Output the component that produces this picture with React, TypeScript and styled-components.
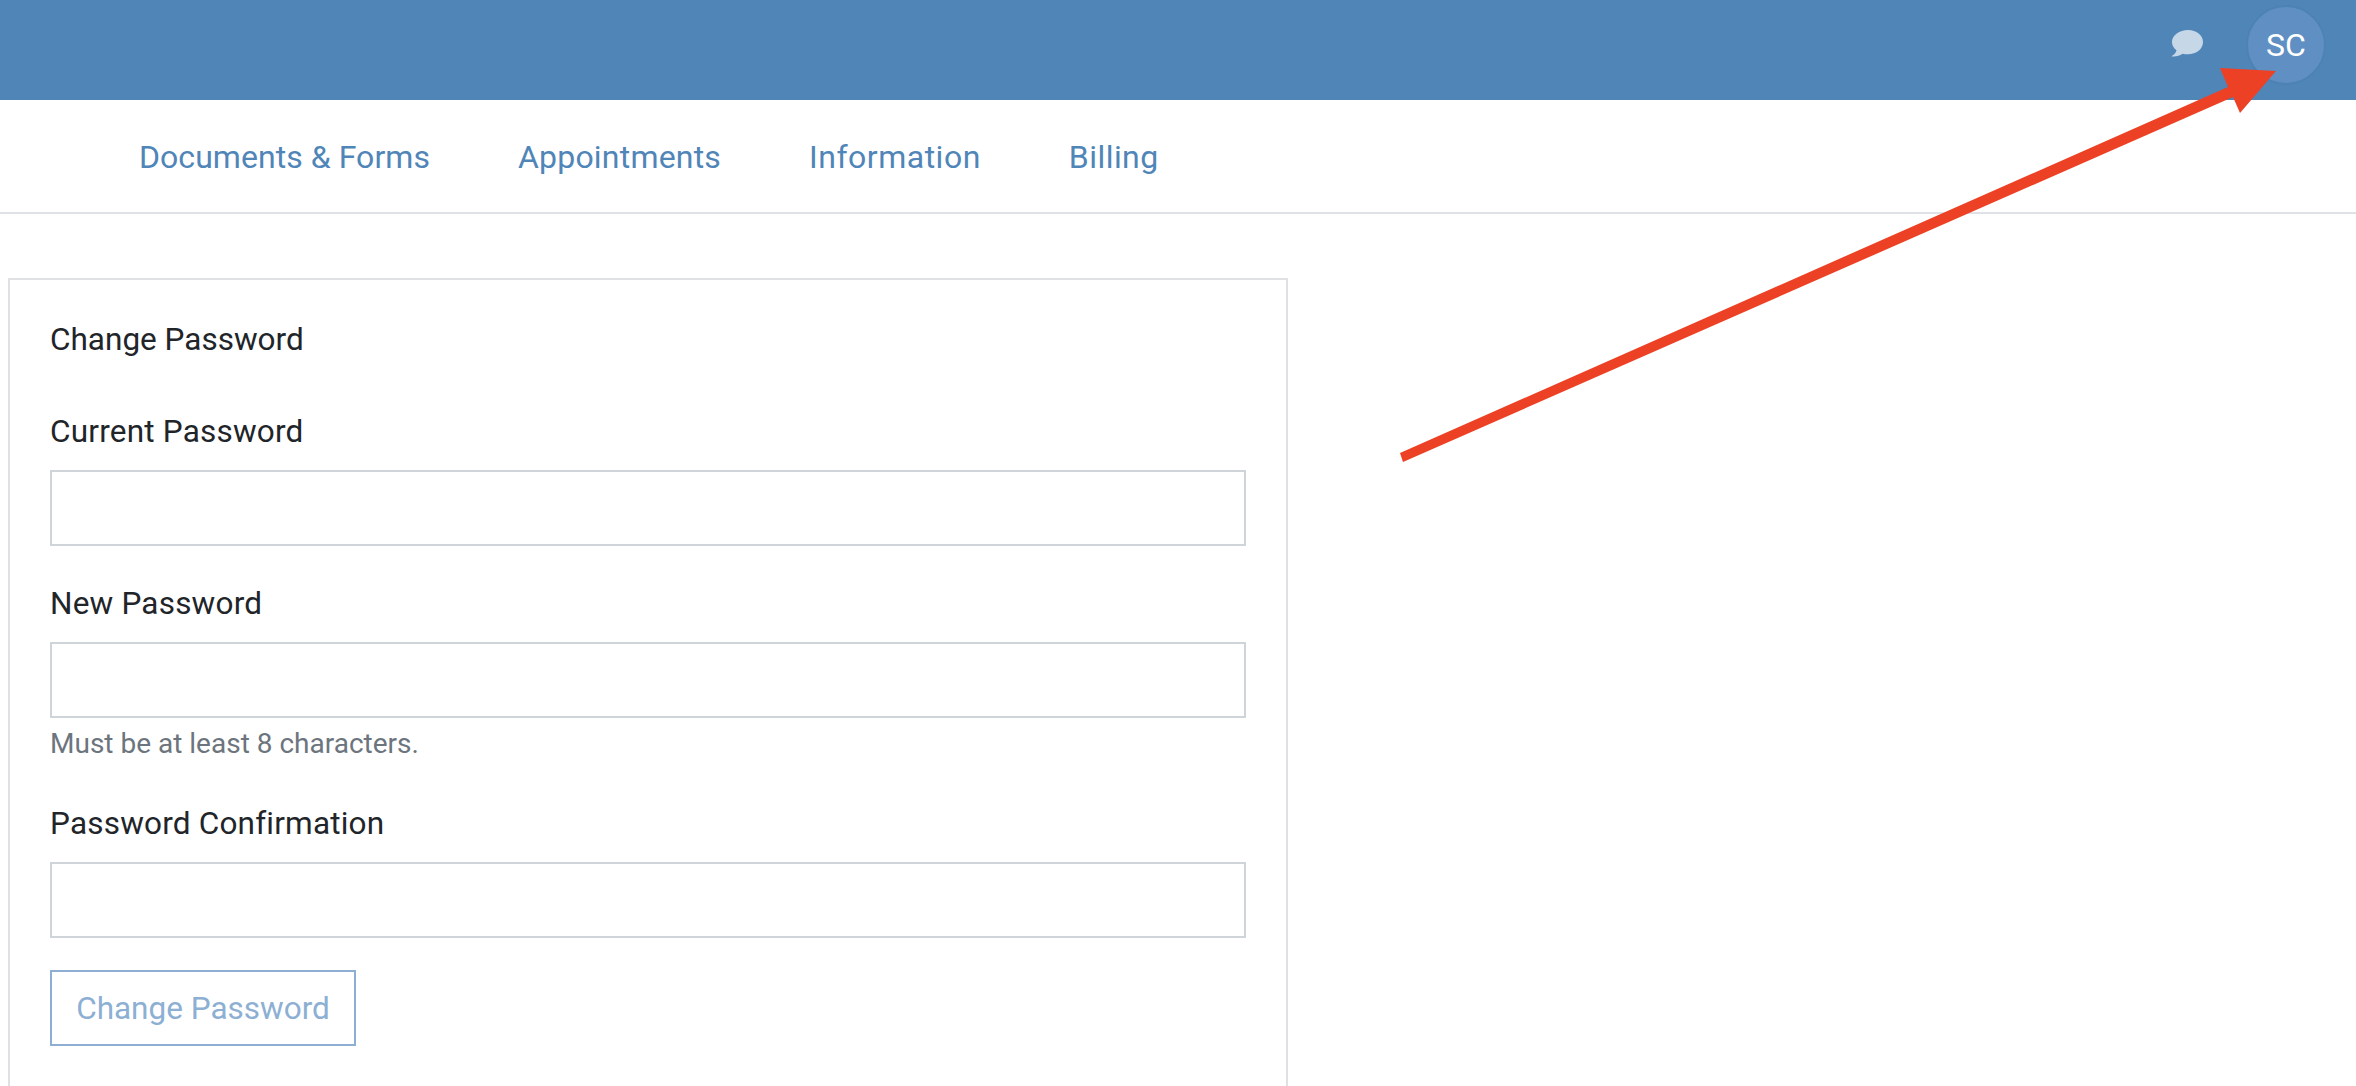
import React from "react";
import styled, { createGlobalStyle } from "styled-components";

const Global = createGlobalStyle`
  html, body { margin: 0; padding: 0; background: #fff; height: 100%; overflow: hidden; }
  body { font-family: "Roboto", "Liberation Sans", sans-serif; color: #212529; font-size: 32px; }
  * { box-sizing: border-box; }
`;

const Page = styled.div`
  position: relative;
  width: 2356px;
  height: 1086px;
  overflow: hidden;
`;

const TopBar = styled.header`
  height: 100px;
  background: #5085b8;
  display: flex;
  align-items: center;
  justify-content: flex-end;
  gap: 42px;
  padding: 0 30px 10px 0;
`;

const ChatButton = styled.div`
  display: flex;
  margin-top: -4px;
`;

const Avatar = styled.div`
  width: 80px;
  height: 80px;
  border-radius: 50%;
  background: #6090c3;
  border: 2px solid #4d82b5;
  color: #fff;
  font-size: 32px;
  display: flex;
  align-items: center;
  justify-content: center;
`;

const Nav = styled.nav`
  height: 114px;
  border-bottom: 2px solid #dee2e6;
  display: flex;
  align-items: center;
  gap: 88px;
  padding: 2px 0 0 139px;
`;

const NavLink = styled.a<{ $track: number }>`
  color: #5085b8;
  font-size: 32px;
  letter-spacing: ${(p) => p.$track}px;
  text-decoration: none;
`;

const Card = styled.section`
  margin: 64px 0 0 8px;
  width: 1280px;
  height: 900px;
  border: 2px solid #dfe1e4;
  padding: 40px 40px;
`;

const CardTitle = styled.h2`
  margin: 0 0 52px;
  font-size: 31.5px;
  line-height: 40px;
  font-weight: 400;
`;

const Field = styled.div<{ $gap: number }>`
  margin-bottom: ${(p) => p.$gap}px;
`;

const Label = styled.label`
  display: block;
  font-size: 31.5px;
  letter-spacing: 0.2px;
  line-height: 40px;
  margin-bottom: 18px;
`;

const Input = styled.div`
  width: 1196px;
  height: 76px;
  border: 2px solid #ced4da;
  background: #fff;
`;

const Hint = styled.div`
  font-size: 28px;
  line-height: 36px;
  margin-top: 8px;
  color: #6c757d;
`;

const SubmitButton = styled.button`
  width: 306px;
  height: 76px;
  border: 2px solid #8cafd3;
  background: #fff;
  color: #8cafd3;
  font: inherit;
  font-size: 31.5px;
  padding: 0;
`;

const Annotation = styled.svg`
  position: absolute;
  left: 0;
  top: 0;
  pointer-events: none;
`;

export default function App() {
  return (
    <Page>
      <Global />
      <TopBar>
        <ChatButton>
          <svg width="34" height="30" viewBox="0 0 34 30">
            <path
              d="M18 2C9.500 2 2 7 2 14c0 3.800 2 6.400 4.500 8.300C6 24.800 4 27 1.500 28.300c3.500.7 8-.4 11-2.600 1.700.4 3.500.6 5.500.6 8.500 0 15-5.400 15-12.300S26.500 2 18 2z"
              fill="#c6d8e8"
            />
          </svg>
        </ChatButton>
        <Avatar>SC</Avatar>
      </TopBar>
      <Nav>
        <NavLink $track={0.05}>Documents &amp; Forms</NavLink>
        <NavLink $track={0.2}>Appointments</NavLink>
        <NavLink $track={0.5}>Information</NavLink>
        <NavLink $track={0.45}>Billing</NavLink>
      </Nav>
      <Card>
        <CardTitle>Change Password</CardTitle>
        <Field $gap={38}>
          <Label>Current Password</Label>
          <Input />
        </Field>
        <Field $gap={42}>
          <Label>New Password</Label>
          <Input />
          <Hint>Must be at least 8 characters.</Hint>
        </Field>
        <Field $gap={32}>
          <Label>Password Confirmation</Label>
          <Input />
        </Field>
        <SubmitButton>Change Password</SubmitButton>
      </Card>
      <Annotation width="2356" height="1086" viewBox="0 0 2356 1086">
        <polygon points="1400,453 2228,87 2220,68 2276,71 2240,113 2233,97 1403,462" fill="#ec4125" />
      </Annotation>
    </Page>
  );
}
